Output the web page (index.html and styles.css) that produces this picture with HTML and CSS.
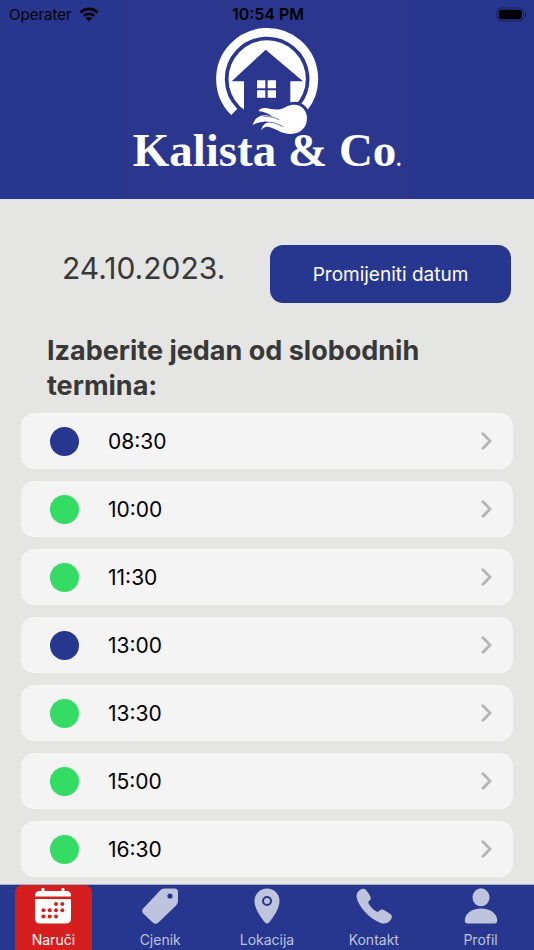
FILE: index.html
```html
<!DOCTYPE html>
<html lang="hr">
<head>
    <meta charset="UTF-8">
    <meta name="viewport" content="width=device-width, initial-scale=1.0">
    <title>Kalista &amp; Co.</title>
    <link rel="stylesheet" href="styles.css">
</head>
<body>
    <header class="header">
        <div class="status-bar">
            <div class="carrier">
                <span>Operater</span>
                <svg class="wifi" viewBox="0 0 20 15" aria-hidden="true">
                    <path d="M1.5 5.4a12.2 12.2 0 0 1 17 0" fill="none" stroke="#000" stroke-width="2.8"/>
                    <path d="M4.8 8.9a7.5 7.5 0 0 1 10.4 0" fill="none" stroke="#000" stroke-width="2.6"/>
                    <path d="M10 14.6l-3.2-3.3a4.6 4.6 0 0 1 6.4 0z"/>
                </svg>
            </div>
            <span class="clock">10:54 PM</span>
            <div class="battery-wrap">
                <svg class="battery" viewBox="0 0 31 15" aria-hidden="true">
                    <rect x="1" y="1" width="26.5" height="13" rx="4" fill="none" stroke="#000" stroke-opacity=".4"/>
                    <rect x="2.8" y="2.8" width="23" height="9.4" rx="2.2"/>
                    <path d="M29 5.2q3 2.3 0 4.6z" fill-opacity=".45"/>
                </svg>
            </div>
        </div>
        <div class="logo">
            <svg class="logo-mark" viewBox="-9 0 420 360" aria-hidden="true">
                <!-- ring and disc -->
                <path d="M102.5 276A140 140 0 1 1 311.8 263" fill="none" stroke="#fff" stroke-width="26" />
                <circle cx="201.5" cy="177" r="116" fill="#fff"/>
                <!-- house -->
                <path d="M197 89L309 184H271V300H132V184H95z" fill="#2b378f"/>
                <path d="M171 181h25v24h-25zM203 181h25v24h-25zM171 211h25v22h-25zM203 211h25v22h-25z" fill="#fff"/>
                <!-- hand -->
                <path d="M283 254C305 254 321 272 321 294C321 322 303 341 272 342C244 342 227 325 207 321C196 319 189 324 184 330C186 317 195 309 207 307C191 303 171 307 158 315C162 299 174 287 193 286C202 286 211 288 218 290C206 281 193 275 175 273C180 265 191 262 203 265C214 268 229 270 243 267C257 262 265 254 283 254Z" fill="#fff" stroke="#2b378f" stroke-width="18" stroke-linejoin="round" paint-order="stroke"/>
                <path d="M193 305Q222 304 250 320M190 289Q222 289 238 300" fill="none" stroke="#2b378f" stroke-width="2"/>
            </svg>
            <div class="logo-text">Kalista &amp; Co<small>.</small></div>
        </div>
    </header>

    <main class="content">
        <div class="date-row">
            <div class="date">24.10.2023.</div>
            <button class="change-date" type="button">Promijeniti datum</button>
        </div>
        <h1 class="title">Izaberite jedan od slobodnih termina:</h1>
        <div class="slots">
            <button class="slot taken" type="button"><span class="dot"></span><span class="time">08:30</span><svg class="chevron" viewBox="0 0 12 20"><path d="M2 2l8 8-8 8"/></svg></button>
            <button class="slot" type="button"><span class="dot"></span><span class="time">10:00</span><svg class="chevron" viewBox="0 0 12 20"><path d="M2 2l8 8-8 8"/></svg></button>
            <button class="slot" type="button"><span class="dot"></span><span class="time">11:30</span><svg class="chevron" viewBox="0 0 12 20"><path d="M2 2l8 8-8 8"/></svg></button>
            <button class="slot taken" type="button"><span class="dot"></span><span class="time">13:00</span><svg class="chevron" viewBox="0 0 12 20"><path d="M2 2l8 8-8 8"/></svg></button>
            <button class="slot" type="button"><span class="dot"></span><span class="time">13:30</span><svg class="chevron" viewBox="0 0 12 20"><path d="M2 2l8 8-8 8"/></svg></button>
            <button class="slot" type="button"><span class="dot"></span><span class="time">15:00</span><svg class="chevron" viewBox="0 0 12 20"><path d="M2 2l8 8-8 8"/></svg></button>
            <button class="slot" type="button"><span class="dot"></span><span class="time">16:30</span><svg class="chevron" viewBox="0 0 12 20"><path d="M2 2l8 8-8 8"/></svg></button>
        </div>
    </main>

    <nav class="tabs">
        <a href="#" class="tab active">
            <svg class="tab-icon" viewBox="0 0 36 36" aria-hidden="true">
                <path d="M0 8.500V7.500Q0 3 4.500 3H6.500V1.300a1.300 1.300 0 0 1 3 0V3H26.500V1.300a1.300 1.300 0 0 1 3 0V3H31.500Q36 3 36 7.500V8.500zM0 11H36V30.500Q36 35.500 31 35.500H5Q0 35.500 0 30.500z"/>
                <g class="tab-hole">
                    <circle cx="21" cy="16" r="2"/><circle cx="27.300" cy="16" r="2"/>
                    <circle cx="8.400" cy="22.300" r="2"/><circle cx="14.700" cy="22.300" r="2"/><circle cx="21" cy="22.300" r="2"/><circle cx="27.300" cy="22.300" r="2"/>
                    <circle cx="8.400" cy="28.500" r="2"/><circle cx="14.700" cy="28.500" r="2"/><circle cx="21" cy="28.500" r="2"/>
                </g>
            </svg>
            <span>Naruči</span>
        </a>
        <a href="#" class="tab">
            <svg class="tab-icon" viewBox="0 0 36 36" aria-hidden="true">
                <path d="M22 .5H32.500Q36 .5 36 4V13Q36 15.500 34.300 17.200L16.200 34.700Q13.500 37 11 34.700L1.200 25.500Q-1 23 1.200 20.500L18.500 2Q20 .5 22 .5z"/>
                <circle class="tab-hole" cx="28" cy="8" r="2.600"/>
            </svg>
            <span>Cjenik</span>
        </a>
        <a href="#" class="tab">
            <svg class="tab-icon" viewBox="0 0 36 36" aria-hidden="true">
                <path d="M18 .5C25 .5 30.500 6 30.500 13C30.500 20 25.500 27.500 20.500 34Q18 37 15.500 34C10.500 27.500 5.500 20 5.500 13C5.500 6 11 .5 18 .5z"/>
                <circle class="tab-ring" cx="18" cy="13" r="4"/>
            </svg>
            <span>Lokacija</span>
        </a>
        <a href="#" class="tab">
            <svg class="tab-icon" viewBox="0 0 36 36" aria-hidden="true">
                <path d="M3.200 2.500C5.500 .7 8 0 9.800 1.800C11.800 4 13.500 7 14.500 9C15.200 11 14 12.200 12.700 13.300C12 14 12.300 15 13 16.200C15 19.500 17.500 22 20.500 23.400C21.800 24 22.600 23.700 23.400 22.700C24.500 21.400 26 21 27.800 21.900C30 23 32.500 24.500 34.700 26.200C36.700 28 36 30.500 34 32.800C31.500 35.500 28 36 24.500 34.900C19 33 13.500 29 9 24C4.500 19 1.500 14 .7 9.500C.3 6.500 1.100 4.300 3.200 2.500z"/>
            </svg>
            <span>Kontakt</span>
        </a>
        <a href="#" class="tab">
            <svg class="tab-icon" viewBox="0 0 36 36" aria-hidden="true">
                <ellipse cx="18" cy="9.300" rx="8.500" ry="9"/>
                <path d="M4.500 35.500Q1.800 35.500 1.800 32.500C1.800 25.500 8.500 20.500 18 20.500S34.200 25.500 34.200 32.500Q34.200 35.500 31.500 35.500z"/>
            </svg>
            <span>Profil</span>
        </a>
    </nav>
</body>
</html>
```
FILE: styles.css
```css
* {
    box-sizing: border-box;
}
body {
    margin: 0;
    min-height: 100vh;
    display: flex;
    flex-direction: column;
    font-family: Inter, "Liberation Sans", sans-serif;
    background-color: #e5e5e3;
    color: #383838;
}
button {
    font-family: inherit;
    border: none;
    cursor: pointer;
}

/* Header */
.header {
    /* slightly warmer panel behind the logo */
    background: linear-gradient(#2b378f, #2b378f) center / 292px 100% no-repeat #27378f;
    padding-bottom: 20px;
}
.status-bar {
    display: grid;
    grid-template-columns: 1fr auto 1fr;
    align-items: center;
    height: 28px;
    padding: 0 7px 0 9px;
    font-size: 15px;
    color: #000;
}
.carrier {
    display: flex;
    align-items: center;
    gap: 7px;
}
.wifi {
    width: 20px;
    height: 15px;
}
.clock {
    font-size: 16px;
    font-weight: 600;
}
.battery-wrap {
    display: flex;
    justify-content: flex-end;
}
.battery {
    width: 31px;
    height: 15px;
}
.logo {
    display: flex;
    flex-direction: column;
    align-items: center;
    margin-top: -8px;
}
.logo-mark {
    width: 140px;
    height: 120px;
}
.logo-text {
    margin-top: -10px;
    margin-bottom: 9px;
    font-family: "Liberation Serif", serif;
    font-size: 47px;
    font-weight: bold;
    line-height: 40px;
    height: 40px;
    color: #fff;
}
.logo-text small {
    font-size: 20px;
}

/* Date and slots */
.content {
    flex: 1;
    padding: 46px 21px 7px;
}
.date-row {
    display: flex;
    justify-content: space-between;
    padding: 0 2px 0 41px;
}
.date {
    font-size: 30px;
    line-height: 46px;
}
.change-date {
    width: 241px;
    height: 58px;
    border-radius: 13px;
    background-color: #27378f;
    color: #fff;
    font-size: 19px;
}
.title {
    margin: 30px 60px 10px 26px;
    font-size: 27px;
    font-weight: bold;
    line-height: 35px;
}
.slots {
    display: flex;
    flex-direction: column;
    gap: 12px;
}
.slot {
    display: flex;
    align-items: center;
    height: 56px;
    padding: 0 21px 0 29px;
    border-radius: 13px;
    background-color: #f4f4f4;
    color: #000;
    font-size: 21px;
    text-align: left;
}
.dot {
    width: 29px;
    height: 29px;
    margin-right: 29px;
    border-radius: 50%;
    background-color: #34dc64;
}
.taken .dot {
    background-color: #27378f;
}
.time {
    flex: 1;
}
.chevron {
    width: 11px;
    height: 18px;
    fill: none;
    stroke: #b5b5b5;
    stroke-width: 3;
    stroke-linecap: round;
    stroke-linejoin: round;
}

/* Bottom tabs */
.tabs {
    position: sticky;
    bottom: 0;
    display: grid;
    grid-template-columns: repeat(5, 1fr);
    justify-items: center;
    height: 66px;
    border-top: 1px solid #a9adc0;
    background-color: #27378f;
}
.tab {
    display: flex;
    flex-direction: column;
    align-items: center;
    gap: 6px;
    width: 77px;
    padding-top: 3px;
    border-radius: 8px 8px 0 0;
    color: #bec3de;
    fill: #bec3de;
    font-size: 14px;
    line-height: 20px;
    text-decoration: none;
}
.tab.active {
    background-color: #d51f1f;
    color: #fff;
    fill: #fff;
}
.tab-icon {
    width: 36px;
    height: 36px;
}
.tab-hole {
    fill: #27378f;
}
.active .tab-hole {
    fill: #d51f1f;
}
.tab-ring {
    fill: none;
    stroke: #27378f;
    stroke-width: 2;
}
```
